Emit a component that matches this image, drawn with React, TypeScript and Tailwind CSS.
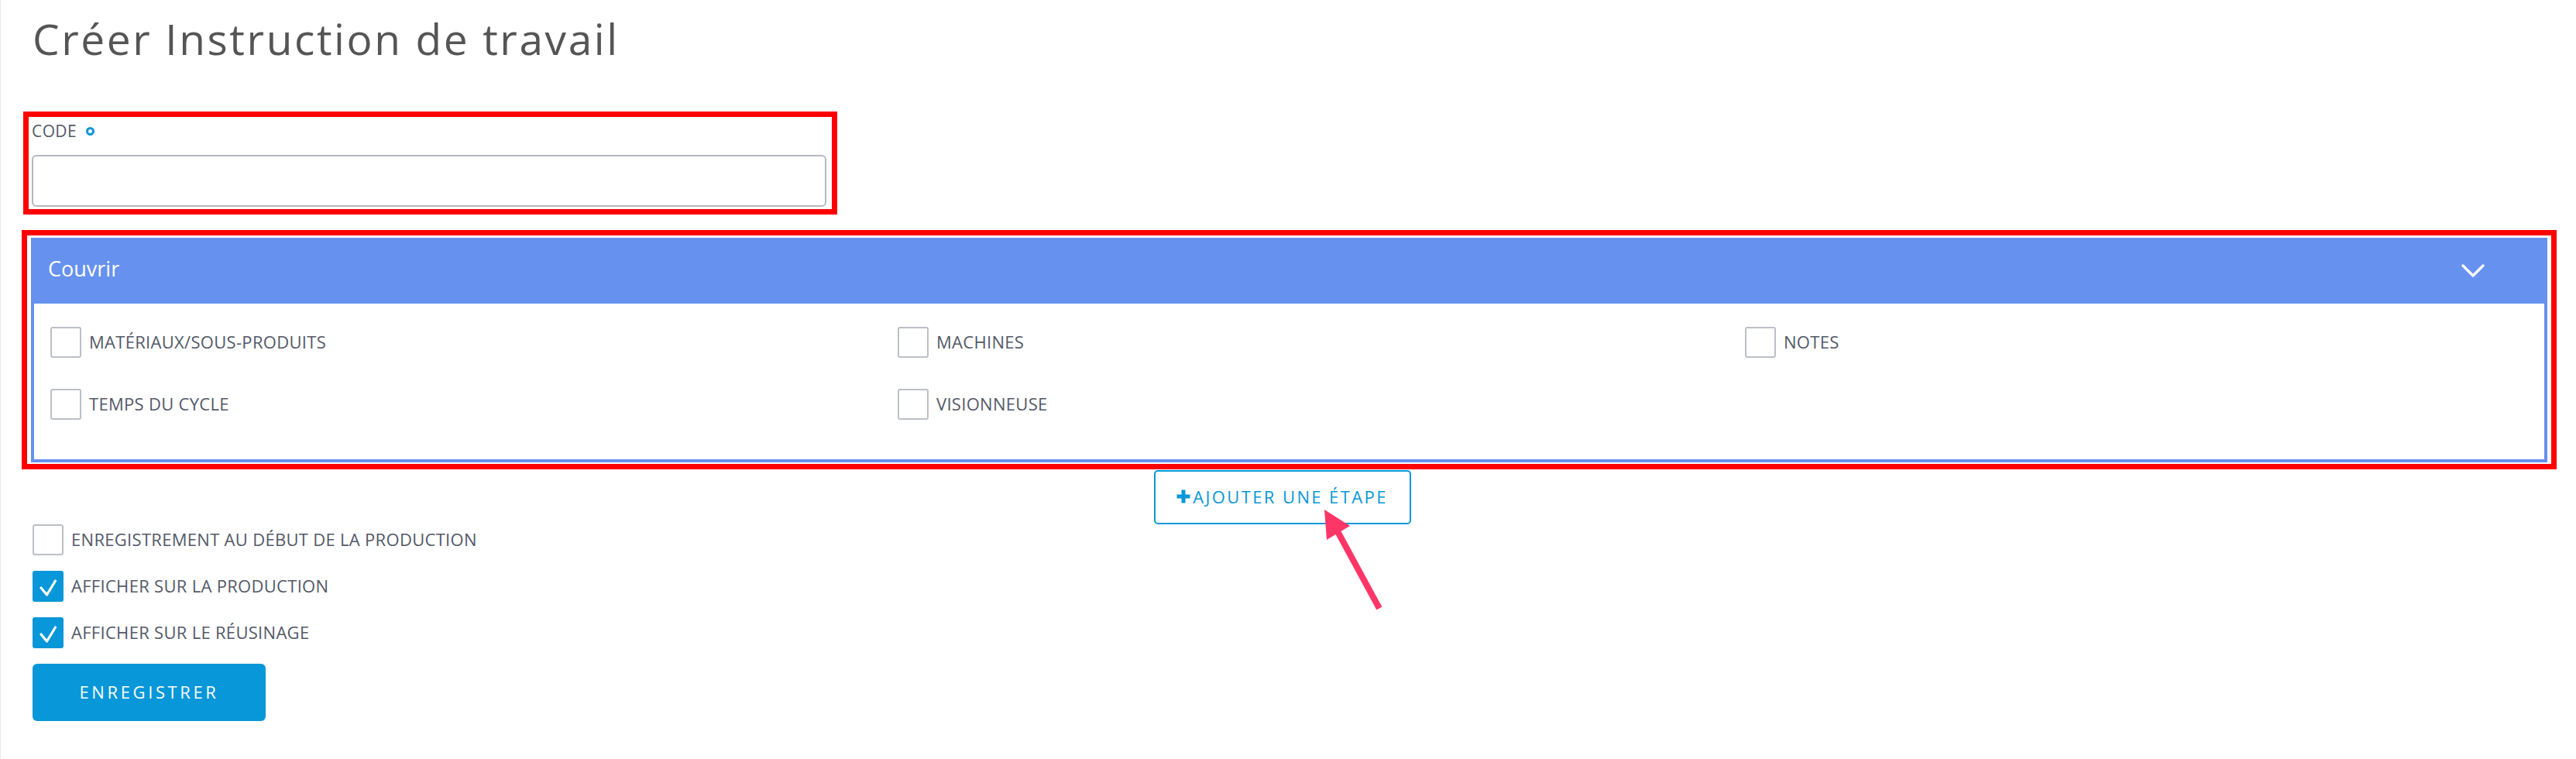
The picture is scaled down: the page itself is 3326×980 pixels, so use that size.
import React from "react";

// Checkbox square drawn as in the screenshot
const CheckBox: React.FC<{ checked?: boolean }> = ({ checked = false }) => {
    if (checked) {
        return (
            <div className="w-[40px] h-[40px] rounded-[3px] bg-[#0897d8] flex items-center justify-center shrink-0">
                <svg width="40" height="40" viewBox="0 0 40 40" fill="none">
                    <polyline points="11,22 18.5,31 29.5,13" stroke="white" strokeWidth="3.2" strokeLinecap="round" strokeLinejoin="round" />
                </svg>
            </div>
        );
    }
    return <div className="w-[40px] h-[40px] rounded-[3px] border-2 border-[#bcc0c6] bg-white shrink-0"></div>;
};

const Option: React.FC<{ label: string; checked?: boolean; gap?: string }> = ({ label, checked, gap = "gap-[10px]" }) => (
    <label className={`flex items-center ${gap}`}>
        <CheckBox checked={checked} />
        <span className="text-[22px] text-[#535968] leading-none tracking-[0.3px] mb-[3px]">{label}</span>
    </label>
);

const App: React.FC = () => {
    return (
        <div className="relative w-full min-h-[980px] bg-white border-l border-[#ececec] font-['Open_Sans','Noto_Sans',sans-serif]">
            {/* Title */}
            <div className="pl-[41px] pt-[18px] h-[144px]">
                <h1 className="text-[55px] leading-[64px] text-[#555555] tracking-[2.6px] font-normal">Créer Instruction de travail</h1>
            </div>

            {/* CODE field */}
            <div className="ml-[29px] w-[1051px] border-[7px] border-[#ff0000] pl-[4px] pr-[6px] pt-[4px] pb-[3px]">
                <div className="flex items-center gap-[12px] h-[28px]">
                    <span className="text-[21px] text-[#535968] leading-none tracking-[0.4px]">CODE</span>
                    <span className="w-[11px] h-[11px] rounded-full border-[3.5px] border-[#0d96d8]"></span>
                </div>
                <input type="text" className="mt-[17px] block w-[1026px] h-[67px] border-2 border-[#b5b8bd] rounded-[6px] bg-white outline-none" />
            </div>

            {/* Couvrir panel */}
            <div className="ml-[27px] mt-[20px] w-[3273px] border-[7px] border-[#ff0000] pl-[5px] pr-[5px] pt-[3px] pb-[2px]">
                <div className="border-4 border-t-0 border-[#6691ee]">
                    <div className="h-[85px] bg-[#6691ee] flex items-center justify-between pl-[18px] pr-[77px]">
                        <span className="text-[27px] text-white leading-none mb-[6px]">Couvrir</span>
                        <svg width="30" height="18" viewBox="0 0 30 18" fill="none">
                            <polyline points="2,2 15,15 28,2" stroke="white" strokeWidth="3.4" strokeLinecap="round" strokeLinejoin="round" />
                        </svg>
                    </div>
                    <div className="grid grid-cols-[1094px_1094px_1fr] gap-y-[40px] pl-[21px] pt-[30px] pb-[51px]">
                        <Option label="MATÉRIAUX/SOUS-PRODUITS" />
                        <Option label="MACHINES" />
                        <Option label="NOTES" />
                        <Option label="TEMPS DU CYCLE" />
                        <Option label="VISIONNEUSE" />
                    </div>
                </div>
            </div>

            {/* Add step */}
            <div className="flex justify-center mt-[1px] pr-[16px]">
                <button className="w-[332px] h-[70px] border-2 border-[#0897d8] rounded-[5px] bg-white flex items-center justify-center gap-[3px] text-[#0897d8] text-[22px] tracking-[2.4px] leading-none">
                    <svg width="18" height="18" viewBox="0 0 18 18" className="mb-[2px]">
                        <path d="M9 0.5 V17.5 M0.5 9 H17.5" stroke="#0897d8" strokeWidth="5" />
                    </svg>
                    <span className="mb-[2px]">AJOUTER UNE ÉTAPE</span>
                </button>
            </div>

            {/* Production options */}
            <div className="pl-[41px] flex flex-col gap-[20px]">
                <Option label="ENREGISTREMENT AU DÉBUT DE LA PRODUCTION" gap="gap-[10px]" />
                <Option label="AFFICHER SUR LA PRODUCTION" checked gap="gap-[10px]" />
                <Option label="AFFICHER SUR LE RÉUSINAGE" checked gap="gap-[10px]" />
            </div>

            <div className="pl-[41px] mt-[20px]">
                <button className="w-[301px] h-[74px] rounded-[6px] bg-[#0897d8] text-white text-[22px] tracking-[3.6px] leading-none pb-[2px]">ENREGISTRER</button>
            </div>

            {/* Pink arrow annotation */}
            <svg className="absolute left-[1690px] top-[650px]" width="110" height="140" viewBox="0 0 110 140" fill="none">
                <line x1="37" y1="38" x2="88" y2="132" stroke="#fe3667" strokeWidth="8" strokeLinecap="square" />
                <polygon points="19,8 22,47 52,29" fill="#fe3667" />
            </svg>
        </div>
    );
};

export default App;
